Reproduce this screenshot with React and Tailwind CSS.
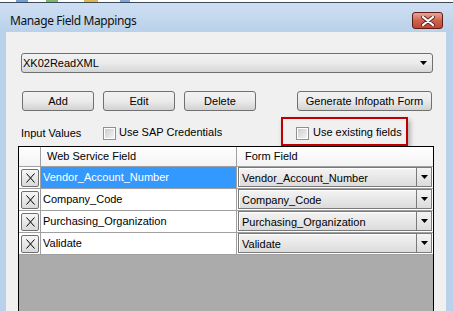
const rows = [
  { name: 'Vendor_Account_Number', selected: true },
  { name: 'Company_Code' },
  { name: 'Purchasing_Organization' },
  { name: 'Validate' },
];

function Arrow() {
  return (
    <svg width="7" height="4" viewBox="0 0 7 4">
      <polygon points="0,0 7,0 3.5,4" fill="#000" />
    </svg>
  );
}

function CheckBox() {
  return (
    <div className="w-[13px] h-[13px] border border-[#8e8f8f] bg-white p-[1px]">
      <div className="w-full h-full bg-linear-to-br from-[#c9ccd1] to-[#f4f4f4]" />
    </div>
  );
}

function WinButton({ label, width }) {
  return (
    <div
      className={`${width} h-[20px] border border-[#707070] rounded-[3px] bg-linear-to-b from-[#f2f2f2] via-[#ebebeb] to-[#d2d2d2] flex items-center justify-center text-[11px] text-black`}
    >
      {label}
    </div>
  );
}

export default function App() {
  return (
    <div className="w-[453px] h-[311px] overflow-hidden bg-white flex flex-col font-['Liberation_Sans',Arial,sans-serif]">
      {/* strip of the desktop behind the window */}
      <div className="h-[3px] flex bg-white border-b border-[#3b4a5c]">
        <div className="ml-[16px] w-[12px] bg-[#6f9fd8]" />
        <div className="ml-[18px] w-[12px] bg-[#7cb86a]" />
        <div className="ml-[26px] w-[14px] bg-[#e3b64a]" />
        <div className="ml-[22px] w-[10px] bg-[#7ea7d6]" />
      </div>

      <div className="flex-1 flex flex-col bg-[#b9d1ea]">
        {/* title bar */}
        <div className="h-[29px] flex items-start justify-between bg-linear-to-b from-[#cfdff2] to-[#b9d1ea]">
          <div className="ml-[10px] mt-[10px] text-[12px] leading-[16px] tracking-[-0.4px] text-[#111] font-['Noto_Sans',sans-serif]">
            Manage Field Mappings
          </div>
          <div className="mt-[9px] mr-[10px] w-[31px] h-[17px] rounded-[3px] border border-[#5e1c17] bg-linear-to-b from-[#e8a494] via-[#d0634f] to-[#c04631] flex items-center justify-center">
            <svg width="14" height="10" viewBox="0 0 14 10">
              <path d="M2 1 L12 9 M12 1 L2 9" stroke="#5a2a24" strokeWidth="4" strokeLinecap="round" />
              <path d="M2 1 L12 9 M12 1 L2 9" stroke="#fff" strokeWidth="2.2" strokeLinecap="round" />
            </svg>
          </div>
        </div>

        {/* client area */}
        <div className="flex-1 ml-[6px] mr-[7px] bg-[#f0f0f0] flex flex-col text-[11px] text-black">
          <div className="mt-[21px] ml-[15px] w-[412px] h-[20px] border border-[#707070] rounded-[3px] bg-linear-to-b from-[#f2f2f2] via-[#ebebeb] to-[#d6d6d6] flex items-center justify-between pl-[1px] pr-[5px]">
            <span>XK02ReadXML</span>
            <Arrow />
          </div>

          <div className="mt-[18px] ml-[16px] flex">
            <WinButton label="Add" width="w-[72px]" />
            <div className="ml-[9px]">
              <WinButton label="Edit" width="w-[72px]" />
            </div>
            <div className="ml-[9px]">
              <WinButton label="Delete" width="w-[72px]" />
            </div>
            <div className="ml-[41px]">
              <WinButton label="Generate Infopath Form" width="w-[135px]" />
            </div>
          </div>

          <div className="h-[35px] flex items-start">
            <div className="ml-[15px] w-[82px] mt-[16px] leading-[13px]">Input Values</div>
            <div className="w-[178px] mt-[16px] flex items-center gap-[3px]">
              <CheckBox />
              <span className="leading-[13px] -mt-[2px]">Use SAP Credentials</span>
            </div>
            <div className="mt-[6px] w-[127px] h-[29px] border-2 border-[#c00000] shadow-[2px_3px_5px_rgba(0,0,0,0.3)] pl-[13px] pt-[8px]">
              <div className="flex items-center gap-[4px]">
                <CheckBox />
                <span className="leading-[13px] -mt-[2px]">Use existing fields</span>
              </div>
            </div>
          </div>

          {/* grid */}
          <div className="ml-[12px] w-[416px] flex-1 border border-b-0 border-black bg-[#ababab] flex flex-col">
            <div className="h-[20px] flex bg-linear-to-b from-white to-[#f3f3f3] border-b border-[#a0a0a0]">
              <div className="w-[22px] border-r border-[#a0a0a0]" />
              <div className="w-[196px] border-r border-[#a0a0a0] pl-[6px] leading-[19px]">Web Service Field</div>
              <div className="w-[196px] pl-[8px] leading-[19px]">Form Field</div>
            </div>
            {rows.map((r) => (
              <div key={r.name} className="h-[22px] flex border-b border-[#a0a0a0] bg-white">
                <div className="w-[22px] border-r border-[#a0a0a0] pl-[2px] pt-[2px]">
                  <div className="w-[18px] h-[18px] border border-[#707070] rounded-[2px] bg-linear-to-b from-[#f6f6f6] to-[#dadada] flex items-center justify-center">
                    <svg width="9" height="10" viewBox="0 0 9 10">
                      <path d="M0.5 0.5 L8.5 9.5 M8.5 0.5 L0.5 9.5" stroke="#000" strokeWidth="1" />
                    </svg>
                  </div>
                </div>
                <div
                  className={`w-[196px] border-r border-[#a0a0a0] pl-[2px] leading-[21px] ${
                    r.selected ? 'bg-[#3399ff] text-white' : ''
                  }`}
                >
                  {r.name}
                </div>
                <div className="w-[196px] pl-[1px]">
                  <div className="w-[194px] h-[20px] flex border border-[#7a7a7a] bg-linear-to-b from-[#f4f4f4] to-[#dcdcdc]">
                    <div className="flex-1 pl-[2px] leading-[18px] border-t border-l border-white">{r.name}</div>
                    <div className="w-[15px] border-l border-[#7a7a7a] flex items-center justify-center">
                      <Arrow />
                    </div>
                  </div>
                </div>
              </div>
            ))}
          </div>
        </div>
      </div>
    </div>
  );
}
